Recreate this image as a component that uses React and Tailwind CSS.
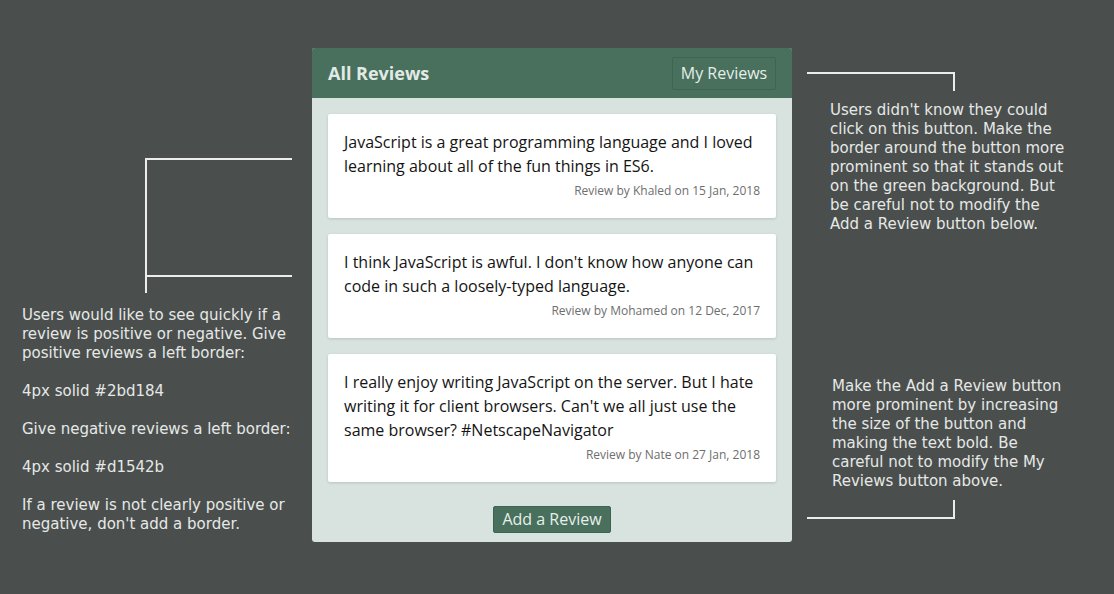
import React from "react";

const reviews = [
  {
    text: "JavaScript is a great programming language and I loved learning about all of the fun things in ES6.",
    meta: "Review by Khaled on 15 Jan, 2018",
  },
  {
    text: "I think JavaScript is awful. I don't know how anyone can code in such a loosely-typed language.",
    meta: "Review by Mohamed on 12 Dec, 2017",
  },
  {
    text: "I really enjoy writing JavaScript on the server. But I hate writing it for client browsers. Can't we all just use the same browser? #NetscapeNavigator",
    meta: "Review by Nate on 27 Jan, 2018",
  },
];

export default function App() {
  return (
    <div className="w-[1114px] h-[594px] bg-[#4a4f4d] flex overflow-hidden">
      {/* Left annotation column */}
      <div className="w-[312px] shrink-0 flex flex-col pt-[158px] font-['DejaVu_Sans',sans-serif] text-[15px] leading-[19px] text-[#e6e8e7]">
        <div className="ml-[145px] w-[147px] h-[119px] border-2 border-r-0 border-[#ececec]" />
        <div className="ml-[145px] w-[2px] h-[16px] bg-[#ececec]" />
        <div className="ml-[22px] mt-[13px] w-[280px]">
          <p>Users would like to see quickly if a review is positive or negative. Give positive reviews a left border:</p>
          <p className="mt-[19px]">4px solid #2bd184</p>
          <p className="mt-[19px]">Give negative reviews a left border:</p>
          <p className="mt-[19px]">4px solid #d1542b</p>
          <p className="mt-[19px]">If a review is not clearly positive or negative, don't add a border.</p>
        </div>
      </div>

      {/* Center panel */}
      <div className="mt-[48px] w-[480px] h-[494px] shrink-0 rounded-[3px] overflow-hidden bg-[#d8e3df] flex flex-col font-['Open_Sans',sans-serif]">
        <div className="h-[50px] bg-[#48705c] flex items-center justify-between pl-4 pr-4">
          <h1 className="text-[18px] font-bold text-[#e1eae6]">All Reviews</h1>
          <button className="w-[104px] h-[33px] border border-[#3f6453] rounded-[2px] text-[16px] text-[#e6eeea] bg-transparent">
            My Reviews
          </button>
        </div>
        <div className="flex flex-col gap-4 p-4">
          {reviews.map((r, i) => (
            <div
              key={i}
              className="bg-white rounded-[2px] shadow-[0_1px_3px_rgba(0,0,0,0.15)] px-4 pt-4 pb-[15px]"
            >
              <p className="text-[16px] leading-[24px] text-[#141414]">{r.text}</p>
              <p className="mt-px text-[12px] leading-[24px] text-right text-[#6e6e6e]">{r.meta}</p>
            </div>
          ))}
        </div>
        <div className="flex justify-center pt-[8px]">
          <button className="h-[27px] px-[8px] bg-[#48705c] border border-[#3e6350] rounded-[2px] text-[16px] leading-[25px] text-[#e8efeb]">
            Add a Review
          </button>
        </div>
      </div>

      {/* Right annotation column */}
      <div className="flex-1 flex flex-col pt-[72px] font-['DejaVu_Sans',sans-serif] text-[15px] leading-[19px] text-[#e6e8e7]">
        <div className="ml-[15px] w-[148px] h-[19px] border-t-2 border-r-2 border-[#ececec]" />
        <p className="ml-[38px] mt-[10px] w-[240px]">
          Users didn't know they could click on this button. Make the border around the button more prominent so that it stands out on the green background. But be careful not to modify the Add a Review button below.
        </p>
        <p className="ml-[40px] mt-[143px] w-[236px]">
          Make the Add a Review button more prominent by increasing the size of the button and making the text bold. Be careful not to modify the My Reviews button above.
        </p>
        <div className="ml-[15px] mt-[9px] w-[148px] h-[19px] border-b-2 border-r-2 border-[#ececec]" />
      </div>
    </div>
  );
}
